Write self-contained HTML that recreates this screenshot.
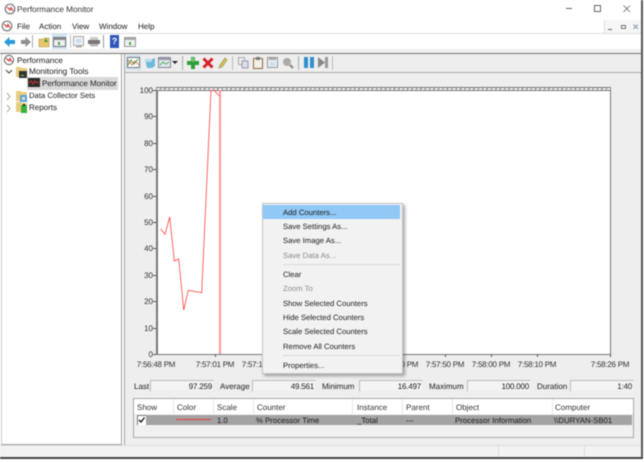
<!DOCTYPE html>
<html><head><meta charset="utf-8"><style>
*{box-sizing:border-box}
html,body{margin:0;padding:0;width:644px;height:462px;overflow:hidden;background:#fff}
body{font-family:"Liberation Sans",sans-serif;font-size:8px;color:#1a1a1a;position:relative;text-rendering:geometricPrecision}
.a,.t{position:absolute}
.t{white-space:nowrap;line-height:12px;height:12px;margin-top:1px}
.b{position:absolute;background:#f4f4f4;border:1px solid #bbb;border-right-color:#eee;border-bottom-color:#eee;height:12px;top:380px;text-align:right;line-height:11px;padding-right:1px;letter-spacing:-.2px}
.m{left:283px;font-size:7.7px}
.d{color:#8a8a8a}
.h{top:401px;color:#333}
.r{top:414px;color:#1a1a1a;font-size:7.8px}
.s{position:absolute;top:399px;width:1px;height:15px;background:#e6e6e6}
.x{top:358px;width:50px;text-align:center;color:#333;letter-spacing:-.25px}
.y{left:130px;width:23px;text-align:right;color:#333}
.k{position:absolute;background:#555}
#blur{position:absolute;left:0;top:0;width:644px;height:462px;filter:blur(.4px)}
</style></head><body><div id="blur">

<div class="a" style="left:0;top:0;width:641px;height:458px;background:#fff"></div>
<div class="a" style="left:641px;top:0;width:2px;height:459px;background:#555"></div>
<div class="a" style="left:0;top:457px;width:643px;height:2px;background:#444"></div>

<!-- title -->
<svg class="a" style="left:4px;top:3px" width="12" height="12" viewBox="0 0 12 12"><circle cx="6" cy="6" r="4.8" fill="#fff" stroke="#777" stroke-width="1.2"/><path d="M3 4 6 7 7 4.5 9 8" fill="none" stroke="#c33" stroke-width="1.1"/></svg>
<div class="t" style="left:17px;top:3px;font-size:8.2px;color:#333">Performance Monitor</div>
<div class="a" style="left:566px;top:8px;width:6px;height:1px;background:#666"></div>
<div class="a" style="left:594px;top:5px;width:7px;height:7px;border:1px solid #666"></div>
<svg class="a" style="left:623px;top:5px" width="8" height="8"><path d="M.5.5 7 7M7 .5.5 7" stroke="#666" stroke-width=".8"/></svg>

<!-- menu -->
<svg class="a" style="left:1px;top:20px" width="12" height="12" viewBox="0 0 12 12"><circle cx="6" cy="6" r="4.8" fill="#fff" stroke="#777" stroke-width="1.2"/><path d="M3 4 6 7 7 4.5 9 8" fill="none" stroke="#c33" stroke-width="1.1"/></svg>
<div class="t" style="left:17px;top:20px">File</div>
<div class="t" style="left:39px;top:20px">Action</div>
<div class="t" style="left:72px;top:20px">View</div>
<div class="t" style="left:99px;top:20px">Window</div>
<div class="t" style="left:138px;top:20px">Help</div>
<div class="a" style="left:604px;top:20px;width:37px;height:13px;background:#f6f6f6;border-left:1px solid #ddd"></div>
<div class="a" style="left:608px;top:29px;width:4px;height:1px;background:#666"></div>
<div class="a" style="left:621px;top:25px;width:5px;height:4px;border:1px solid #777"></div>
<svg class="a" style="left:633px;top:24px" width="6" height="6"><path d="M.5.5 5 5M5 .5.5 5" stroke="#8899aa" stroke-width="1"/></svg>
<div class="a" style="left:0;top:33px;width:641px;height:1px;background:#ddd"></div>

<!-- toolbar 1 -->
<svg class="a" style="left:3px;top:35px" width="28" height="14"><path d="M1 7 6.5 2V5H12V9H6.5V12Z" fill="#2a9ad8"/><path d="M28 7 22.500 2V5H18V9H22.500V12Z" fill="#8f8f8f"/></svg>
<div class="a" style="left:32px;top:35px;width:1px;height:13px;background:#aaa"></div>
<svg class="a" style="left:38px;top:35px" width="13" height="13"><path d="M1 4H5L6 3H11V12H1Z" fill="#e8c66c" stroke="#b3954a" stroke-width=".6"/><path d="M6 7 8 3 10 7" fill="#4a9a3a"/></svg>
<div class="a" style="left:52px;top:34px;width:15px;height:15px;background:#cfe4f5"></div>
<svg class="a" style="left:53px;top:36px" width="13" height="12"><rect x=".5" y="1.500" width="12" height="9" fill="#f0f0f0" stroke="#777"/><rect x="1" y="2" width="11" height="2" fill="#888"/><rect x="5" y="6" width="2" height="3" fill="#4a4"/></svg>
<div class="a" style="left:70px;top:35px;width:1px;height:13px;background:#bbb"></div>
<svg class="a" style="left:73px;top:36px" width="12" height="12"><rect x=".5" y=".5" width="10" height="9" fill="#eef3f7" stroke="#aaa"/><rect x="3" y="3" width="5" height="4" fill="#cde"/><rect x="3" y="10" width="6" height="1.500" fill="#aaa"/></svg>
<svg class="a" style="left:88px;top:37px" width="12" height="10"><rect x="2" y="0" width="8" height="3" fill="#ccc"/><rect x="0" y="3" width="12" height="4" fill="#777"/><rect x="2" y="7" width="8" height="2.500" fill="#bbb"/></svg>
<div class="a" style="left:103px;top:35px;width:1px;height:13px;background:#999"></div>
<div class="a" style="left:110px;top:35px;width:9px;height:13px;background:#2f55b8;color:#fff;font-weight:bold;font-size:9px;line-height:13px;text-align:center">?</div>
<svg class="a" style="left:124px;top:37px" width="13" height="11"><rect x=".5" y=".5" width="11" height="9" fill="#f0f0f0" stroke="#999"/><rect x="1" y="1" width="10" height="2" fill="#aaa"/><rect x="5" y="5" width="2" height="3" fill="#4a4"/></svg>

<div class="a" style="left:0;top:49px;width:641px;height:4px;background:#f0f0f0"></div>
<div class="a" style="left:0;top:53px;width:641px;height:1px;background:#777"></div>

<!-- tree pane -->
<div class="a" style="left:1px;top:54px;width:121px;height:391px;background:#fff;border:1px solid #a0a0a0;border-top:0;border-left-color:#ccc"></div>
<svg class="a" style="left:3px;top:54px" width="12" height="12" viewBox="0 0 12 12"><circle cx="6" cy="6" r="4.6" fill="#fff" stroke="#777" stroke-width="1.2"/><path d="M3 4 6 7 7 4.5 9 8" fill="none" stroke="#c33" stroke-width="1.1"/></svg>
<div class="t" style="left:17px;top:54px">Performance</div>
<svg class="a" style="left:5px;top:69px" width="8" height="6"><path d="M1 1 4 4 7 1" fill="none" stroke="#444"/></svg>
<svg class="a" style="left:16px;top:66px" width="12" height="12"><path d="M0 1H5L6 2H11V11H0Z" fill="#e9cd7e"/><rect x="3" y="5" width="8" height="7" fill="#333"/><rect x="5" y="9" width="3" height="1" fill="#5d5"/></svg>
<div class="t" style="left:29px;top:65px;font-size:8.2px">Monitoring Tools</div>
<div class="a" style="left:27px;top:77px;width:91px;height:13px;background:#d9d9d9"></div>
<svg class="a" style="left:28px;top:78px" width="12" height="10"><rect width="12" height="9" fill="#2b2b2b"/><path d="M1 5 3 3 5 6 7 3 9 5 11 4" fill="none" stroke="#d33" stroke-width=".9"/></svg>
<div class="t" style="left:42px;top:77px;color:#1a1a1a">Performance Monitor</div>
<svg class="a" style="left:6px;top:92px" width="6" height="9"><path d="M1 1 4 4.500 1 8" fill="none" stroke="#aaa"/></svg>
<svg class="a" style="left:16px;top:90px" width="12" height="12"><path d="M0 1H5L6 2H11V11H0Z" fill="#e9cd7e"/><rect x="4" y="5" width="7" height="7" fill="#5aa5d8"/><rect x="6" y="7" width="3" height="3" fill="#ddd"/></svg>
<div class="t" style="left:29px;top:89px;font-size:7.7px">Data Collector Sets</div>
<svg class="a" style="left:6px;top:104px" width="6" height="9"><path d="M1 1 4 4.500 1 8" fill="none" stroke="#aaa"/></svg>
<svg class="a" style="left:16px;top:101px" width="12" height="12"><path d="M0 1H5L6 2H11V11H0Z" fill="#e9cd7e"/><rect x="5" y="4" width="6" height="8" fill="#3bb13b"/><rect x="7" y="3" width="2" height="2" fill="#222"/></svg>
<div class="t" style="left:29px;top:101px">Reports</div>

<!-- right panel -->
<div class="a" style="left:124px;top:54px;width:517px;height:391px;background:#eeeeee;border-left:1px solid #a0a0a0"></div>
<div class="a" style="left:125px;top:72px;width:516px;height:1px;background:#a8a8a8"></div>

<!-- toolbar 2 -->
<div class="a" style="left:126px;top:55px;width:15px;height:15px;background:#cfe4f5"></div>
<svg class="a" style="left:127px;top:57px" width="13" height="12"><rect x=".5" y=".5" width="12" height="10" fill="#fff" stroke="#777"/><path d="M1 8 4 3 7 7 11 2" fill="none" stroke="#3a3" stroke-width="1"/><path d="M1 3 5 8 8 4 12 8" fill="none" stroke="#d55" stroke-width=".8"/></svg>
<svg class="a" style="left:144px;top:57px" width="12" height="12"><path d="M1 2H8L11 1V9L8 11H3Z" fill="#6db9dc"/><path d="M1 2H8V5H2Z" fill="#b7dcec"/></svg>
<svg class="a" style="left:158px;top:57px" width="13" height="12"><rect x=".5" y=".5" width="12" height="10" fill="#dfe7ee" stroke="#889"/><rect x="1" y="1" width="11" height="2" fill="#99a"/><path d="M2 8 5 5 8 7 11 5" fill="none" stroke="#5a5" stroke-width="1"/></svg>
<svg class="a" style="left:172px;top:61px" width="7" height="4"><path d="M0 0H6L3 3Z" fill="#222"/></svg>
<div class="a" style="left:182px;top:56px;width:1px;height:14px;background:#aaa"></div>
<svg class="a" style="left:187px;top:57px" width="12" height="12"><path d="M4 0H8V4H12V8H8V12H4V8H0V4H4Z" fill="#2e9e3c"/><path d="M4.500 .5H7.500V4.500H4.500Z" fill="#74c96f"/></svg>
<svg class="a" style="left:202px;top:57px" width="12" height="12"><path d="M1.500 1.500 10.500 10.500M10.500 1.500 1.500 10.500" stroke="#d5222a" stroke-width="3"/></svg>
<svg class="a" style="left:218px;top:57px" width="10" height="12"><path d="M7 1 9 3 4 10 1 11 2 8Z" fill="#d9c24f" stroke="#7c8a55" stroke-width=".6"/></svg>
<div class="a" style="left:232px;top:56px;width:1px;height:14px;background:#bbb"></div>
<svg class="a" style="left:238px;top:57px" width="11" height="12"><rect x=".5" y=".5" width="6" height="7" fill="#eee" stroke="#aaa"/><rect x="4" y="4" width="6" height="7" fill="#dde" stroke="#99a"/></svg>
<svg class="a" style="left:253px;top:57px" width="10" height="12"><rect x=".5" y="1.500" width="9" height="10" fill="#f4f0e6" stroke="#8a6a3f" stroke-width="1"/><rect x="3" y="0" width="4" height="3" fill="#777"/></svg>
<svg class="a" style="left:267px;top:57px" width="12" height="12"><rect x=".5" y=".5" width="10" height="10" fill="#e6edf3" stroke="#999"/><rect x="2" y="1" width="7" height="2" fill="#aaa"/><rect x="3" y="5" width="5" height="4" fill="#cde"/></svg>
<svg class="a" style="left:282px;top:57px" width="12" height="12"><circle cx="5" cy="5" r="4" fill="#aaa"/><path d="M8 8 11 11" stroke="#888" stroke-width="2.200"/></svg>
<div class="a" style="left:298px;top:56px;width:1px;height:14px;background:#aaa"></div>
<div class="a" style="left:304px;top:57px;width:4px;height:11px;background:#2f8fd0"></div>
<div class="a" style="left:310px;top:57px;width:4px;height:11px;background:#2f8fd0"></div>
<svg class="a" style="left:318px;top:57px" width="11" height="11"><path d="M0 0 7 5.500 0 11Z" fill="#888"/><rect x="7" y="0" width="3" height="11" fill="#999"/></svg>
<div class="a" style="left:332px;top:56px;width:1px;height:14px;background:#bbb"></div>

<!-- chart -->
<div class="a" style="left:156px;top:90px;width:455px;height:265px;background:#fff;border:1px solid #777;border-left:2px solid #777"></div>
<div class="a" style="left:156px;top:87px;width:455px;height:3px;background:repeating-linear-gradient(115deg,#888 0 1px,#f4f4f4 1px 4px);border-top:1px solid #777"></div>
<svg class="a" style="left:156px;top:85px" width="70" height="272"><path d="M4.700 144 9 149.300 13.700 132 18.300 176 22.700 174 27.700 225 32.300 205.300 45.700 207.700 55 5.500 58.300 5.500 64 12" fill="none" stroke="#ff4040" stroke-width=".8"/><rect x="63" y="5" width="2" height="264" fill="#ff9a9a"/></svg>

<div class="t y" style="top:84px">100</div><div class="k" style="left:153px;top:90px;width:3px;height:1px"></div>
<div class="t y" style="top:110px">90</div><div class="k" style="left:153px;top:116px;width:3px;height:1px"></div>
<div class="t y" style="top:137px">80</div><div class="k" style="left:153px;top:143px;width:3px;height:1px"></div>
<div class="t y" style="top:163px">70</div><div class="k" style="left:153px;top:169px;width:3px;height:1px"></div>
<div class="t y" style="top:190px">60</div><div class="k" style="left:153px;top:196px;width:3px;height:1px"></div>
<div class="t y" style="top:216px">50</div><div class="k" style="left:153px;top:222px;width:3px;height:1px"></div>
<div class="t y" style="top:242px">40</div><div class="k" style="left:153px;top:248px;width:3px;height:1px"></div>
<div class="t y" style="top:269px">30</div><div class="k" style="left:153px;top:275px;width:3px;height:1px"></div>
<div class="t y" style="top:295px">20</div><div class="k" style="left:153px;top:301px;width:3px;height:1px"></div>
<div class="t y" style="top:322px">10</div><div class="k" style="left:153px;top:328px;width:3px;height:1px"></div>
<div class="t y" style="top:348px">0</div><div class="k" style="left:153px;top:354px;width:3px;height:1px"></div>

<div class="k" style="left:215px;top:354px;width:1px;height:3px"></div>
<div class="k" style="left:445px;top:354px;width:1px;height:3px"></div>
<div class="k" style="left:491px;top:354px;width:1px;height:3px"></div>
<div class="k" style="left:537px;top:354px;width:1px;height:3px"></div>
<div class="k" style="left:610px;top:354px;width:1px;height:3px"></div>
<div class="t x" style="left:131px">7:56:48 PM</div>
<div class="t x" style="left:190px">7:57:01 PM</div>
<div class="t x" style="left:236px">7:57:10 PM</div>
<div class="t x" style="left:374px">7:57:40 PM</div>
<div class="t x" style="left:420px">7:57:50 PM</div>
<div class="t x" style="left:466px">7:58:00 PM</div>
<div class="t x" style="left:512px">7:58:10 PM</div>
<div class="t x" style="left:585px">7:58:26 PM</div>

<!-- stats -->
<div class="t" style="left:134px;top:380px">Last</div><div class="b" style="left:150px;width:64px">97.259</div>
<div class="t" style="left:220px;top:380px">Average</div><div class="b" style="left:252px;width:64px">49.561</div>
<div class="t" style="left:322px;top:380px">Minimum</div><div class="b" style="left:359px;width:64px">16.497</div>
<div class="t" style="left:429px;top:380px">Maximum</div><div class="b" style="left:467px;width:64px">100.000</div>
<div class="t" style="left:537px;top:380px">Duration</div><div class="b" style="left:570px;width:64px">1:40</div>

<!-- table -->
<div class="a" style="left:133px;top:398px;width:501px;height:40px;background:#f0f0f0;border:1px solid #a8a8a8"></div>
<div class="a" style="left:134px;top:399px;width:499px;height:15px;background:#fff"></div>
<div class="s" style="left:173px"></div><div class="s" style="left:213px"></div><div class="s" style="left:253px"></div><div class="s" style="left:352px"></div><div class="s" style="left:402px"></div><div class="s" style="left:452px"></div><div class="s" style="left:552px"></div>
<div class="t h" style="left:137px">Show</div>
<div class="t h" style="left:177px">Color</div>
<div class="t h" style="left:217px">Scale</div>
<div class="t h" style="left:257px">Counter</div>
<div class="t h" style="left:357px">Instance</div>
<div class="t h" style="left:406px">Parent</div>
<div class="t h" style="left:456px">Object</div>
<div class="t h" style="left:555px">Computer</div>
<div class="a" style="left:146px;top:415px;width:486px;height:10px;background:#a3a3a3"></div>
<div class="a" style="left:137px;top:415px;width:9px;height:10px;background:#fff;border-left:1px solid #777;border-top:1px solid #777"></div>
<svg class="a" style="left:138px;top:416px" width="8" height="8"><path d="M1 4 3 6 6.500 1.500" fill="none" stroke="#111" stroke-width="1.300"/></svg>
<div class="a" style="left:176px;top:419px;width:35px;height:1px;background:#e8383c"></div>
<div class="t r" style="left:217px">1.0</div>
<div class="t r" style="left:256px">% Processor Time</div>
<div class="t r" style="left:357px">_Total</div>
<div class="t r" style="left:406px">---</div>
<div class="t r" style="left:455px">Processor Information</div>
<div class="t r" style="left:554px">\\DURYAN-SB01</div>

<!-- status bar -->
<div class="a" style="left:0;top:445px;width:641px;height:12px;background:#f2f2f2;border-top:1px solid #ddd"></div>
<div class="a" style="left:498px;top:446px;width:1px;height:11px;background:#ddd"></div>
<div class="a" style="left:584px;top:446px;width:1px;height:11px;background:#ddd"></div>

<!-- context menu -->
<div class="a" style="left:262px;top:203px;width:141px;height:171px;background:#f2f2f2;border:1px solid #c4c4c4;box-shadow:2px 2px 3px rgba(0,0,0,.35)"></div>
<div class="a" style="left:263px;top:205px;width:137px;height:14px;background:#90c8f6"></div>
<div class="t m" style="top:206px">Add Counters...</div>
<div class="t m" style="top:220px">Save Settings As...</div>
<div class="t m" style="top:234px">Save Image As...</div>
<div class="t m d" style="top:249px">Save Data As...</div>
<div class="a" style="left:283px;top:264px;width:117px;height:1px;background:#d8d8d8"></div>
<div class="t m" style="top:268px">Clear</div>
<div class="t m d" style="top:282px">Zoom To</div>
<div class="t m" style="top:297px">Show Selected Counters</div>
<div class="t m" style="top:311px">Hide Selected Counters</div>
<div class="t m" style="top:325px">Scale Selected Counters</div>
<div class="t m" style="top:340px">Remove All Counters</div>
<div class="a" style="left:283px;top:355px;width:117px;height:1px;background:#d8d8d8"></div>
<div class="t m" style="top:359px">Properties...</div>

</div></body></html>
